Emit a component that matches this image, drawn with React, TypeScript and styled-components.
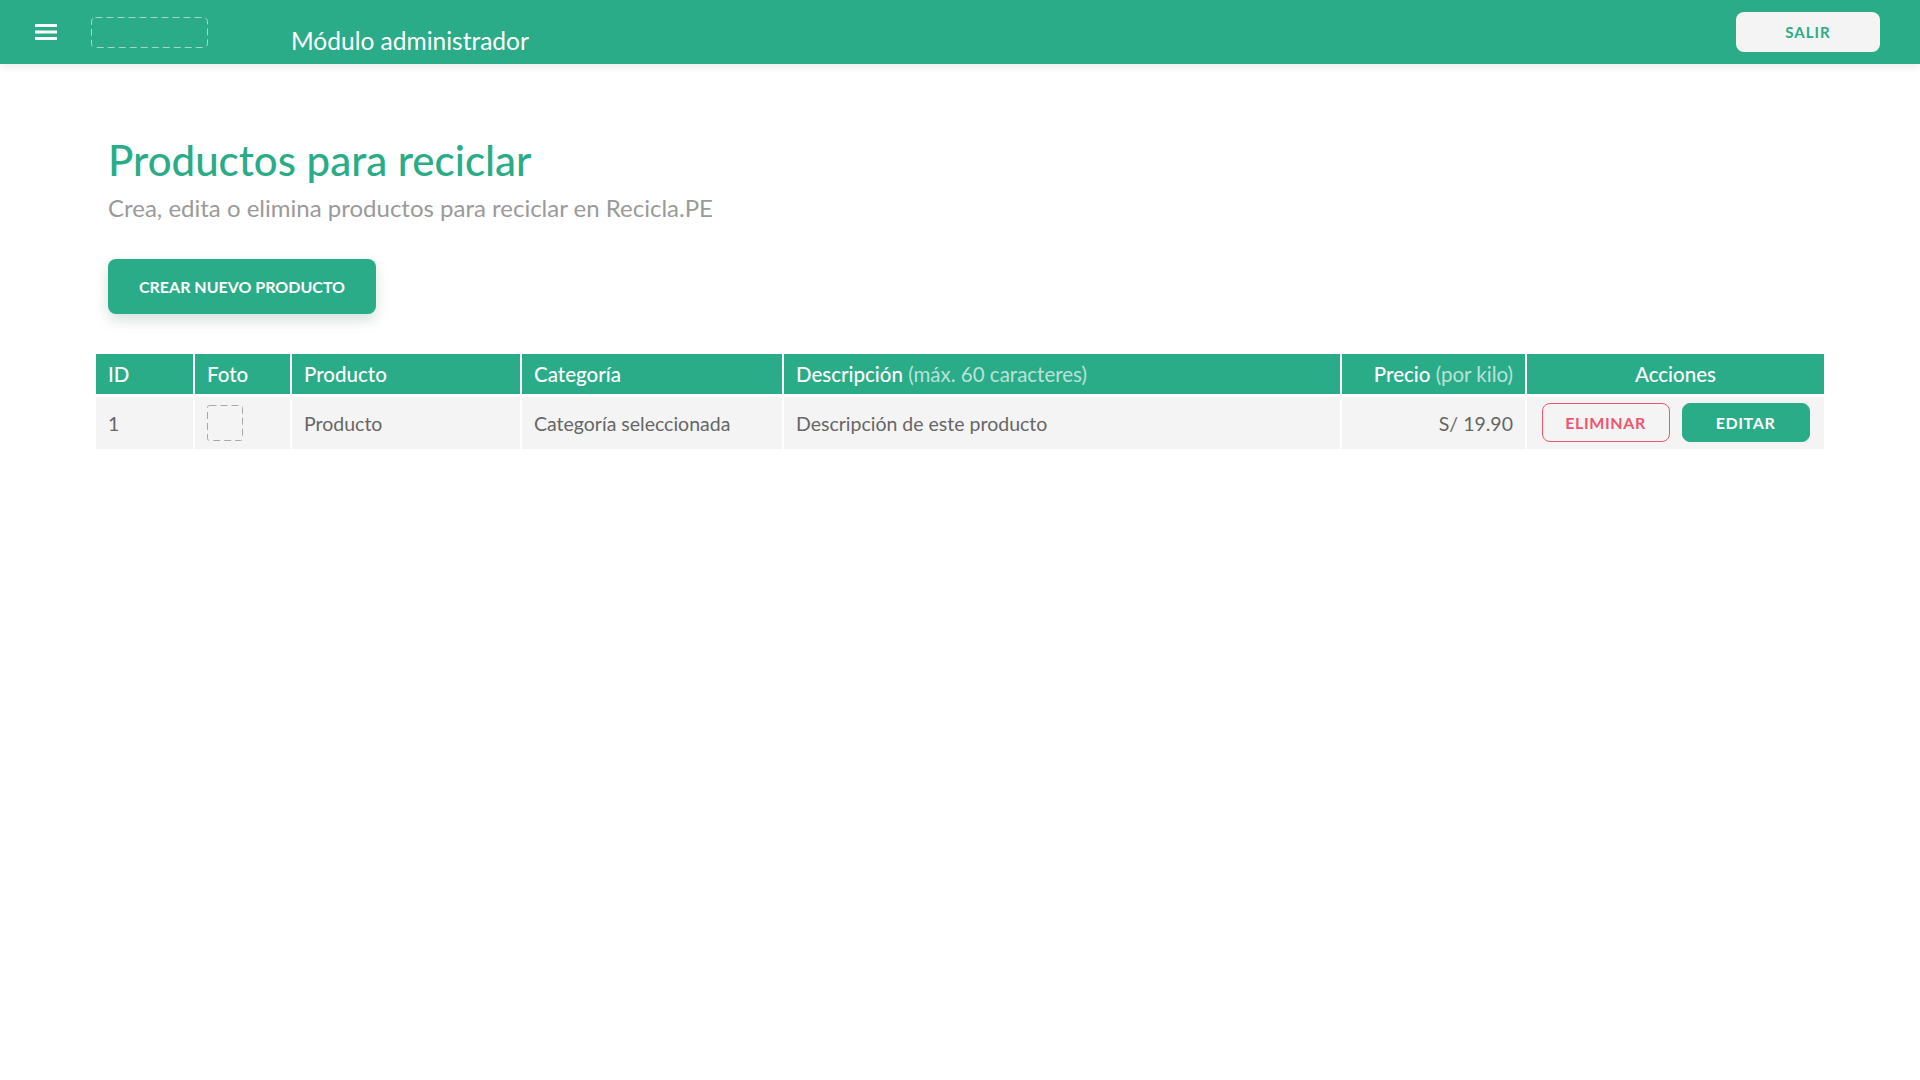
import React from "react";
import styled, { createGlobalStyle } from "styled-components";

const GREEN = "#2aac88";
const RED = "#ef5470";

const GlobalStyle = createGlobalStyle`
  html, body {
    margin: 0;
    padding: 0;
    background: #ffffff;
    font-family: "Lato", "Noto Sans", sans-serif;
  }
  * { box-sizing: border-box; }
`;

const TopBar = styled.header`
  height: 64px;
  background: ${GREEN};
  display: flex;
  align-items: center;
  padding: 0 40px 0 35px;
  box-shadow: 0 3px 8px rgba(0, 0, 0, 0.08);
  position: relative;
  z-index: 1;
`;

const MenuButton = styled.button`
  width: 22px;
  height: 16px;
  padding: 0;
  border: 0;
  background: transparent;
  display: flex;
  cursor: pointer;
`;

const LogoSlot = styled.div`
  margin-left: 34px;
  width: 117px;
  height: 31px;
  display: flex;
`;

const ModuleTitle = styled.div`
  margin-left: 83px;
  margin-top: 18px;
  color: #ffffff;
  font-size: 24.5px;
  line-height: 1.2;
`;

const Spacer = styled.div`
  flex: 1;
`;

const ExitButton = styled.button`
  width: 144px;
  height: 40px;
  border: 0;
  border-radius: 8px;
  background: #f4f4f4;
  color: ${GREEN};
  font-family: inherit;
  font-size: 15px;
  font-weight: 700;
  letter-spacing: 1px;
  cursor: pointer;
`;

const Main = styled.main`
  padding: 0 96px;
`;

const Intro = styled.section`
  padding: 71px 12px 0;
`;

const Heading = styled.h1`
  margin: 0;
  color: ${GREEN};
  font-size: 42px;
  font-weight: 500;
  line-height: 1.2;
`;

const Subtitle = styled.p`
  margin: 9px 0 0;
  color: #9a9a9a;
  font-size: 24px;
  line-height: 1.2;
`;

const PrimaryButton = styled.button`
  margin-top: 36px;
  width: 268px;
  height: 55px;
  border: 0;
  border-radius: 8px;
  background: ${GREEN};
  color: #ffffff;
  font-family: inherit;
  font-size: 16px;
  font-weight: 700;
  letter-spacing: 0;
  box-shadow: 0 6px 14px rgba(30, 110, 90, 0.2);
  cursor: pointer;
`;

const Table = styled.table`
  margin-top: 40px;
  width: 100%;
  table-layout: fixed;
  border-collapse: separate;
  border-spacing: 0;
`;

const HeadCell = styled.th<{ $align?: "left" | "right" | "center" }>`
  height: 40px;
  padding: 0 12px;
  background: ${GREEN};
  color: #ffffff;
  font-size: 20.5px;
  font-weight: 500;
  text-align: ${(p) => p.$align ?? "left"};
  vertical-align: middle;
  white-space: nowrap;
  & + & {
    border-left: 2px solid #ffffff;
  }
`;

const Muted = styled.span`
  color: rgba(255, 255, 255, 0.68);
  font-weight: 400;
`;

const BodyCell = styled.td<{ $align?: "left" | "right" | "center" }>`
  height: 55px;
  padding: 0 12px;
  background: #f4f4f4;
  border-top: 3px solid #ffffff;
  color: #666666;
  font-size: 19.5px;
  text-align: ${(p) => p.$align ?? "left"};
  vertical-align: middle;
  white-space: nowrap;
  & + & {
    border-left: 2px solid #ffffff;
  }
`;

const PhotoSlot = styled.div`
  width: 36px;
  height: 36px;
  display: flex;
`;

const Actions = styled.div`
  display: flex;
  justify-content: center;
  gap: 12px;
  margin-bottom: 1px;
`;

const ActionButton = styled.button<{ $variant: "danger" | "primary" }>`
  width: 128px;
  height: 39px;
  border-radius: 8px;
  border: 1px solid ${(p) => (p.$variant === "danger" ? RED : GREEN)};
  background: ${(p) => (p.$variant === "danger" ? "transparent" : GREEN)};
  color: ${(p) => (p.$variant === "danger" ? RED : "#ffffff")};
  font-family: inherit;
  font-size: 16px;
  font-weight: 700;
  letter-spacing: 0.6px;
  cursor: pointer;
`;

const columns = [97, 97, 230, 262, 558, 185, 299];

function DashedBox({ w, h, color, r }: { w: number; h: number; color: string; r: number }) {
  return (
    <svg width={w} height={h} viewBox={`0 0 ${w} ${h}`}>
      <rect
        x="0.5"
        y="0.5"
        width={w - 1}
        height={h - 1}
        rx={r}
        fill="none"
        stroke={color}
        strokeWidth="1"
        strokeDasharray="7 4"
      />
    </svg>
  );
}

export default function App() {
  return (
    <>
      <GlobalStyle />
      <TopBar>
        <MenuButton aria-label="Menú">
          <svg width="22" height="16" viewBox="0 0 22 16">
            <rect x="0" y="0" width="22" height="3" fill="#ffffff" />
            <rect x="0" y="6.5" width="22" height="3" fill="#ffffff" />
            <rect x="0" y="13" width="22" height="3" fill="#ffffff" />
          </svg>
        </MenuButton>
        <LogoSlot>
          <DashedBox w={117} h={31} r={4} color="rgba(255,255,255,0.55)" />
        </LogoSlot>
        <ModuleTitle>Módulo administrador</ModuleTitle>
        <Spacer />
        <ExitButton>SALIR</ExitButton>
      </TopBar>
      <Main>
        <Intro>
          <Heading>Productos para reciclar</Heading>
          <Subtitle>Crea, edita o elimina productos para reciclar en Recicla.PE</Subtitle>
          <PrimaryButton>CREAR NUEVO PRODUCTO</PrimaryButton>
        </Intro>
        <Table>
          <colgroup>
            {columns.map((w, i) => (
              <col key={i} style={{ width: w }} />
            ))}
          </colgroup>
          <thead>
            <tr>
              <HeadCell>ID</HeadCell>
              <HeadCell>Foto</HeadCell>
              <HeadCell>Producto</HeadCell>
              <HeadCell>Categoría</HeadCell>
              <HeadCell>
                Descripción <Muted>(máx. 60 caracteres)</Muted>
              </HeadCell>
              <HeadCell $align="right">
                Precio <Muted>(por kilo)</Muted>
              </HeadCell>
              <HeadCell $align="center">Acciones</HeadCell>
            </tr>
          </thead>
          <tbody>
            <tr>
              <BodyCell>1</BodyCell>
              <BodyCell>
                <PhotoSlot>
                  <DashedBox w={36} h={36} r={2} color="#a8a8a8" />
                </PhotoSlot>
              </BodyCell>
              <BodyCell>Producto</BodyCell>
              <BodyCell>Categoría seleccionada</BodyCell>
              <BodyCell>Descripción de este producto</BodyCell>
              <BodyCell $align="right">S/ 19.90</BodyCell>
              <BodyCell $align="center">
                <Actions>
                  <ActionButton $variant="danger">ELIMINAR</ActionButton>
                  <ActionButton $variant="primary">EDITAR</ActionButton>
                </Actions>
              </BodyCell>
            </tr>
          </tbody>
        </Table>
      </Main>
    </>
  );
}
